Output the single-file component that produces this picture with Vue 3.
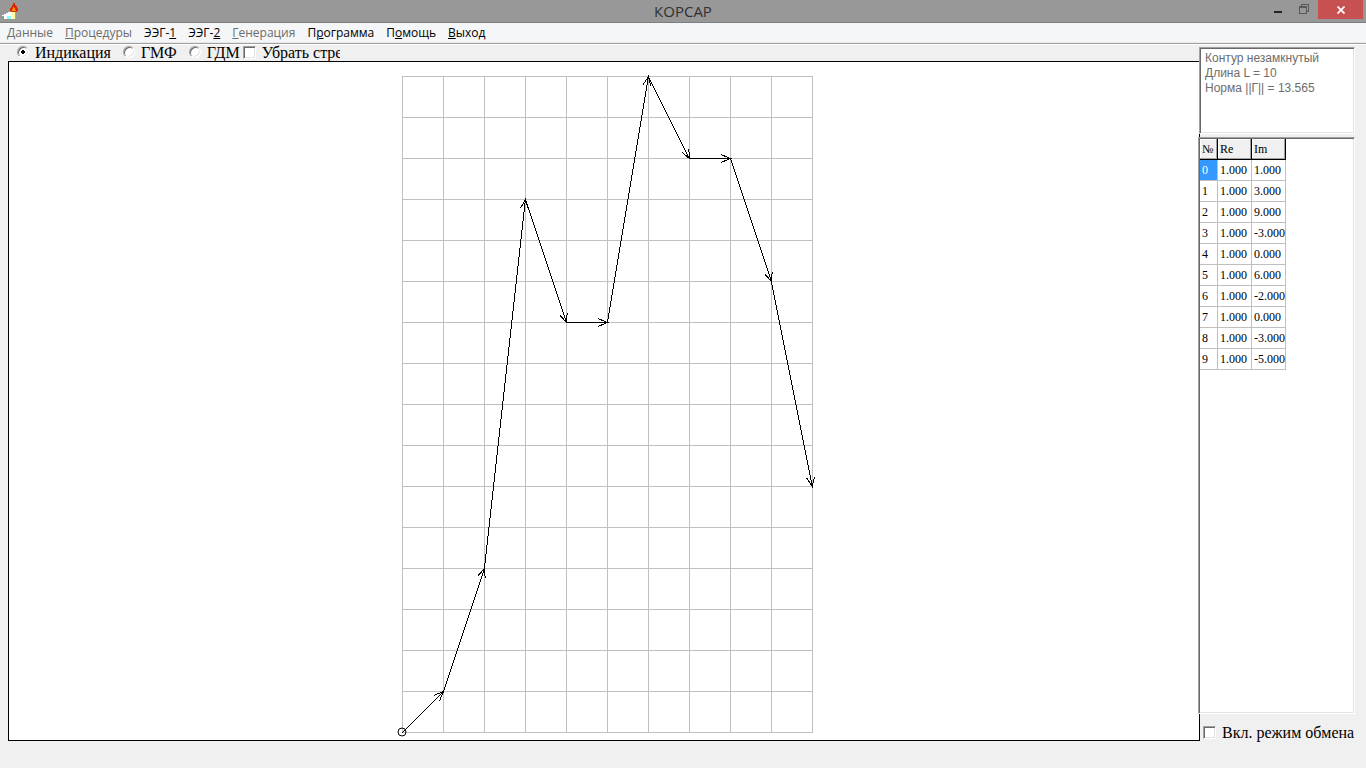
<script setup>
import { ref } from 'vue'

const menu = [
  { pre: '', key: 'Д', post: 'анные', off: true },
  { pre: '', key: 'П', post: 'роцедуры', off: true },
  { pre: 'ЭЭГ-', key: '1', post: '' },
  { pre: 'ЭЭГ-', key: '2', post: '' },
  { pre: '', key: 'Г', post: 'енерация', off: true },
  { pre: 'П', key: 'р', post: 'ограмма' },
  { pre: 'П', key: 'о', post: 'мощь' },
  { pre: '', key: 'В', post: 'ыход' },
]
const modes = ['Индикация', 'ГМФ', 'ГДМ']
const mode = ref('Индикация')
const hideArrows = ref(false)
const exchange = ref(false)
const selected = ref(0)
const info = ref('Контур незамкнутый\nДлина L = 10\nНорма ||Г|| = 13.565')

const vectors = [[1, 1], [1, 3], [1, 9], [1, -3], [1, 0], [1, 6], [1, -2], [1, 0], [1, -3], [1, -5]]

const cell = 41
const cols = 10
const rows = 16
const left = 393.5
const top = 14.5
const bottom = top + rows * cell

// The contour starts just beside the pixel centre so that steep lines stay one pixel wide.
const points = [[left - 0.1, bottom]]
for (const [re, im] of vectors) {
  const [x, y] = points[points.length - 1]
  points.push([x + re * cell, y - im * cell])
}
const line = points.map((p) => p.join(',')).join(' ')

const heads = points.slice(1).map(([x, y], i) => {
  const [px, py] = points[i]
  const a = Math.atan2(y - py, x - px)
  const wing = (d) => `${(x - 10 * Math.cos(a + d)).toFixed(1)},${(y - 10 * Math.sin(a + d)).toFixed(1)}`
  return `${wing(0.4)} ${x},${y} ${wing(-0.4)}`
})
</script>

<template>
  <div class="window">
    <header class="titlebar">
      <svg class="logo" width="18" height="18" viewBox="0 0 18 18" shape-rendering="crispEdges">
        <path d="M0 12h2v-1h2v-1h2v-1h4v7H2v-3H0z" fill="#fff" />
        <path d="M5 13h4v3H5z" fill="#8ff" />
        <path d="M10 9h4v7h-4z" fill="#ffffa0" />
        <path d="M13 9h1v7h-1z" fill="#b8a860" />
        <path d="M11 0h2v2h1v1h1v2h1v3h-1v1H9V8H8V5h1V4h1V2h1z" fill="#e02800" />
        <path d="M11 4h1v1h1v2h1v1h-4V6h1z" fill="#ff9400" />
      </svg>
      <h1>КОРСАР</h1>
      <div class="buttons">
        <button aria-label="Свернуть">
          <svg width="10" height="12" viewBox="0 0 10 12"><path d="M1 7h8v2H1z" fill="#222" /></svg>
        </button>
        <button aria-label="Восстановить">
          <svg width="10" height="10" viewBox="0 0 10 10" fill="none" stroke="#5a5a5a" shape-rendering="crispEdges">
            <path d="M.5 2.5h7v7h-7zM.5 3.5h7M2.5 2V.5h7v7H8" />
          </svg>
        </button>
        <button class="close" aria-label="Закрыть">
          <svg width="8" height="8" viewBox="0 0 8 8"><path d="M.5.5l7 7M7.5.5l-7 7" stroke="#fff" stroke-width="1.8" /></svg>
        </button>
      </div>
    </header>

    <nav class="menu">
      <button v-for="m in menu" :key="m.pre + m.key + m.post" :disabled="m.off">{{ m.pre }}<u>{{ m.key }}</u>{{ m.post }}</button>
    </nav>

    <main class="body">
      <section class="work">
        <div class="options">
          <label v-for="m in modes" :key="m" class="radio">
            <input v-model="mode" type="radio" name="mode" :value="m" />{{ m }}
          </label>
          <label class="check hide">
            <input v-model="hideArrows" type="checkbox" />Убрать стре
          </label>
        </div>
        <div class="plot">
          <svg viewBox="0 0 1190 678" fill="none" shape-rendering="crispEdges">
            <g stroke="#c0c0c0">
              <line v-for="i in cols + 1" :key="'c' + i" :x1="left + (i - 1) * cell" :x2="left + (i - 1) * cell" :y1="top" :y2="bottom" />
              <line v-for="i in rows + 1" :key="'r' + i" :x1="left - 0.5" :x2="left + cols * cell + 0.5" :y1="top + (i - 1) * cell" :y2="top + (i - 1) * cell" />
            </g>
            <g stroke="#000">
              <polyline :points="line" />
              <template v-if="!hideArrows">
                <polyline v-for="h in heads" :key="h" :points="h" />
              </template>
              <circle :cx="left - 0.5" :cy="bottom - 0.5" r="4" shape-rendering="geometricPrecision" />
            </g>
          </svg>
        </div>
      </section>

      <aside class="side">
        <textarea v-model="info" class="memo" aria-label="Сведения о контуре" readonly></textarea>
        <div class="list">
          <table>
            <thead>
              <tr><th class="num">№</th><th>Re</th><th>Im</th></tr>
            </thead>
            <tbody>
              <tr v-for="(v, i) in vectors" :key="i">
                <td :class="{ sel: i === selected }" @click="selected = i">{{ i }}</td>
                <td>{{ v[0].toFixed(3) }}</td>
                <td>{{ v[1].toFixed(3) }}</td>
              </tr>
            </tbody>
          </table>
        </div>
        <label class="check exchange">
          <input v-model="exchange" type="checkbox" />Вкл. режим обмена
        </label>
      </aside>
    </main>
  </div>
</template>

<style>
html,
body {
  margin: 0;
  background: #f0f0f0;
}
</style>

<style scoped>
.window {
  display: flex;
  flex-direction: column;
  height: 100vh;
  overflow: hidden;
  background: #f0f0f0;
  color: #000;
  font-family: "Liberation Serif", serif;
}
button {
  margin: 0;
  padding: 0;
  border: 0;
  background: none;
  font: inherit;
  color: inherit;
}
.titlebar {
  display: grid;
  grid-template-columns: 1fr auto 1fr;
  height: 22px;
  background: #989898;
  border-bottom: 1px solid #7c7f82;
}
.logo {
  margin: 3px 0 0 2px;
}
h1 {
  margin: 0;
  font: 15px/22px "Open Sans", sans-serif;
  color: #303030;
}
.buttons {
  display: flex;
  justify-content: flex-end;
  padding-right: 3px;
}
.buttons button {
  display: flex;
  justify-content: center;
  width: 26px;
  height: 19px;
  padding-top: 4px;
  box-sizing: border-box;
}
.buttons .close {
  width: 45px;
  margin-left: 1px;
  padding-top: 6px;
  background: #c75050;
}
.menu {
  display: flex;
  gap: 12px;
  height: 19px;
  padding-left: 7px;
  background: #f5f6f7;
  border-bottom: 1px solid #e8e9ea;
  font: 12px/19px "Open Sans", sans-serif;
}
.menu button:disabled {
  color: #6d6d6d;
}
.body {
  display: flex;
  flex: 1;
  min-height: 0;
  border-top: 1px solid #a0a0a0;
  box-shadow: inset 0 1px #fff;
}
.work {
  display: flex;
  flex: 1;
  flex-direction: column;
  min-width: 0;
  padding: 1px 0 27px 8px;
}
.options {
  display: flex;
  width: 332px;
  height: 16px;
  overflow: hidden;
  font-size: 16px;
  line-height: 16px;
  white-space: nowrap;
}
.radio,
.check {
  display: flex;
}
.radio {
  gap: 6px;
  margin-left: 9px;
}
.radio + .radio {
  margin-left: 12px;
}
.hide {
  gap: 6px;
  margin-left: 3px;
}
input {
  flex: none;
  appearance: none;
  box-sizing: border-box;
  margin: 0;
  background: #fff;
  border: 1px solid;
  border-color: #a0a0a0 #fff #fff #a0a0a0;
  box-shadow: inset 1px 1px #696969, inset -1px -1px #e3e3e3;
}
input[type="radio"] {
  width: 12px;
  height: 12px;
  margin-top: 1px;
  border-radius: 50%;
}
input[type="radio"]:checked {
  background: radial-gradient(circle, #000 2px, #fff 2px);
}
input[type="checkbox"] {
  width: 13px;
  height: 13px;
}
.hide input[type="checkbox"] {
  margin-top: 1px;
}
.plot {
  flex: 1;
  min-height: 0;
  background: #fff;
  border: 1px solid #000;
}
.plot svg {
  display: block;
  width: 100%;
  height: 100%;
}
.side {
  position: relative;
  display: flex;
  flex-direction: column;
  width: 157px;
  margin: 3px 11px 27px -2px;
}
.memo,
.list {
  box-sizing: border-box;
  background: #fff;
  border: 1px solid;
  border-color: #a0a0a0 #fff #fff #a0a0a0;
  box-shadow: inset 1px 1px #696969, inset -1px -1px #e3e3e3;
}
.memo {
  height: 87px;
  margin: 0 0 3px 1px;
  padding: 3px 5px;
  resize: none;
  outline: 0;
  font: 12px/15px "Liberation Sans", sans-serif;
  color: #6d6d6d;
}
.list {
  flex: 1;
  min-height: 0;
  padding: 1px;
}
table {
  border-collapse: separate;
  border-spacing: 0;
  table-layout: fixed;
  width: 86px;
  font-size: 12px;
  line-height: 20px;
}
th,
td {
  padding: 0 0 0 2px;
  height: 20px;
  border-right: 1px solid #c0c0c0;
  border-bottom: 1px solid #c0c0c0;
  font-weight: 400;
  text-align: left;
  white-space: nowrap;
}
th {
  background: #f0f0f0;
  border-color: #000;
  box-shadow: inset -1px -1px #a0a0a0, inset 1px 1px #fff;
}
.num {
  width: 15px;
}
.sel {
  background: #3399ff;
  color: #fff;
}
.exchange {
  gap: 6px;
  height: 27px;
  padding-left: 5px;
  align-items: center;
  box-sizing: border-box;
  padding-top: 10px;
  font-size: 16px;
  line-height: 16px;
  white-space: nowrap;
}
</style>
